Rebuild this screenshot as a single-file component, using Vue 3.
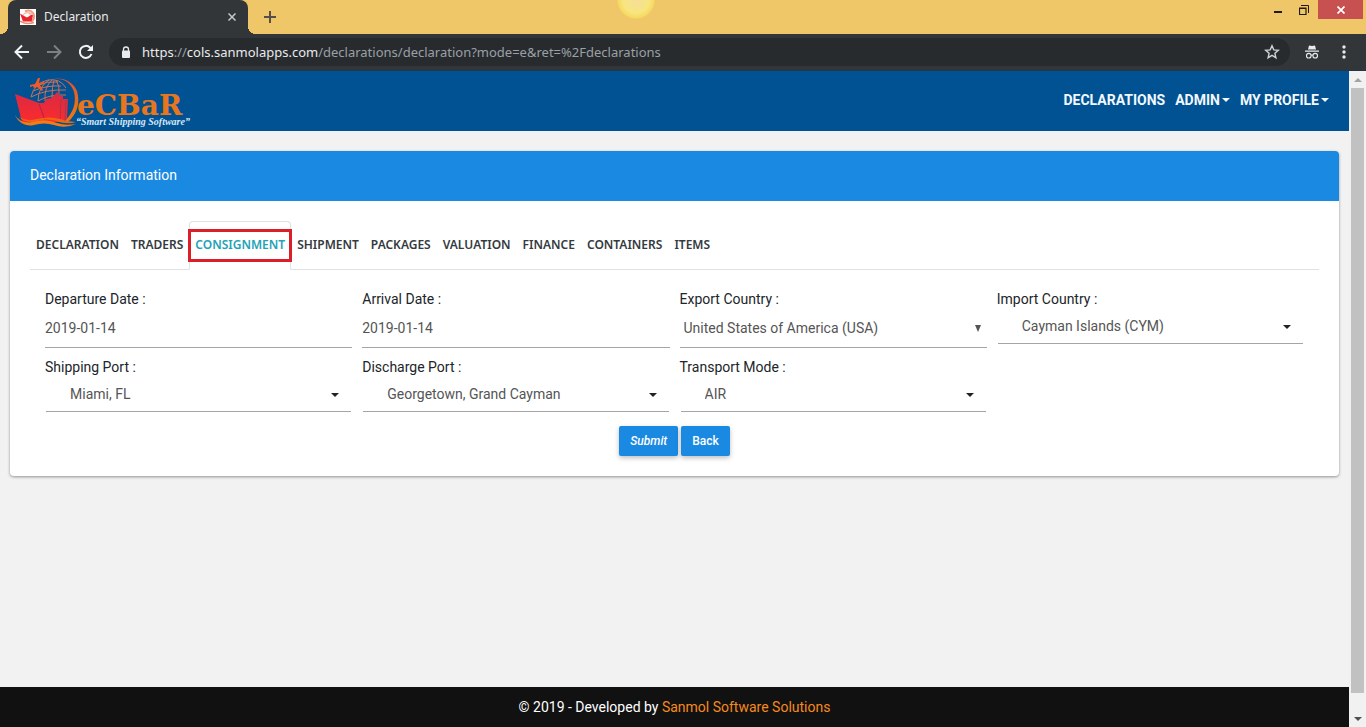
<script setup>
import { ref } from 'vue'

const tabs = ['Declaration', 'Traders', 'Consignment', 'Shipment', 'Packages', 'Valuation', 'Finance', 'Containers', 'Items']
const active = ref('Consignment')

const fields = ref([
  { id: 'departure', label: 'Departure Date :', kind: 'input', value: '2019-01-14' },
  { id: 'arrival', label: 'Arrival Date :', kind: 'input', value: '2019-01-14' },
  { id: 'export', label: 'Export Country :', kind: 'native', value: 'United States of America (USA)' },
  { id: 'import', label: 'Import Country :', kind: 'select', value: 'Cayman Islands (CYM)' },
  { id: 'shipping', label: 'Shipping Port :', kind: 'select', value: 'Miami, FL' },
  { id: 'discharge', label: 'Discharge Port :', kind: 'select', value: 'Georgetown, Grand Cayman' },
  { id: 'transport', label: 'Transport Mode :', kind: 'select', value: 'AIR' }
])
</script>

<template>
  <div class="window">
    <div class="titlebar">
      <div class="tab">
        <svg class="favicon" viewBox="0 0 16 16" aria-hidden="true">
          <rect width="16" height="16" fill="#fff" />
          <path d="M5 2.500Q10 0 13 4q3 5-2 9" fill="none" stroke="#f29a80" stroke-width="2" />
          <path d="M3 6q3-4 9-1M7 3q4 2 4 6" fill="none" stroke="#f4b6a0" stroke-width="1.200" />
          <path d="M0 4.500l5 3 2 1 5-3 1 1-1.500 6H3z" fill="#e8232b" />
          <path d="M0 12q6 4 14 1.500" fill="none" stroke="#f08a70" stroke-width="1.500" />
        </svg>
        <span class="tab-title">Declaration</span>
        <button class="tab-close" aria-label="Close tab">
          <svg width="8" height="8" viewBox="0 0 8 8"><path d="M.5.5l7 7M7.500.5l-7 7" stroke="#c6c9cc" stroke-width="1.500" /></svg>
        </button>
      </div>
      <button class="new-tab" aria-label="New tab">
        <svg width="12" height="12" viewBox="0 0 12 12"><path d="M6 0v12M0 6h12" stroke="#56504a" stroke-width="2" /></svg>
      </button>
      <div class="sun"></div>
      <div class="controls">
        <button class="control" aria-label="Minimize">
          <svg width="8" height="12" viewBox="0 0 8 12"><path d="M0 8h8" stroke="#1e1a14" stroke-width="2" /></svg>
        </button>
        <button class="control" aria-label="Restore">
          <svg width="10" height="10" viewBox="0 0 10 10"><path d="M2 .5h7.500v7.500" fill="none" stroke="#1e1a14" /><path d="M.5 3.500h6.500v6h-6.500zM0 3h7.500" fill="none" stroke="#1e1a14" stroke-width="1.200" /></svg>
        </button>
        <button class="control close" aria-label="Close">
          <svg width="8" height="8" viewBox="0 0 8 8"><path d="M.5.5l7 7M7.500.5l-7 7" stroke="#fff" stroke-width="1.700" /></svg>
        </button>
      </div>
    </div>

    <div class="toolbar">
      <button class="tool" aria-label="Back">
        <svg width="16" height="16" viewBox="0 0 16 16"><path d="M15 8H2M8 1.500L1.500 8 8 14.500" fill="none" stroke="#f1f3f4" stroke-width="2" /></svg>
      </button>
      <button class="tool" aria-label="Forward">
        <svg width="16" height="16" viewBox="0 0 16 16"><path d="M1 8h13M8 1.500L14.500 8 8 14.500" fill="none" stroke="#7d8083" stroke-width="2" /></svg>
      </button>
      <button class="tool" aria-label="Reload">
        <svg width="16" height="16" viewBox="0 0 16 16"><path d="M13.500 10a6 6 0 1 1-1.300-6.300L14 5.500" fill="none" stroke="#f1f3f4" stroke-width="2" /><path d="M15 1v6H9z" fill="#f1f3f4" /></svg>
      </button>
      <div class="omnibox">
        <svg width="10" height="13" viewBox="0 0 10 13" aria-hidden="true"><path d="M2.500 5V3.500a2.500 2.500 0 0 1 5 0V5" fill="none" stroke="#e8eaed" stroke-width="1.300" /><rect x="1" y="4.500" width="8" height="7.500" rx="1" fill="#e8eaed" /></svg>
        <div class="url" role="textbox" aria-label="Address" tabindex="0"><b>https</b>://<b>cols.sanmolapps.com</b>/declarations/declaration?mode=e&amp;ret=%2Fdeclarations</div>
        <button class="star" aria-label="Bookmark">
          <svg width="16" height="16" viewBox="0 0 16 16"><path d="M8 1.800l1.800 4.100 4.500.4-3.400 3 1 4.400L8 11.400l-3.900 2.300 1-4.400-3.400-3 4.500-.4z" fill="none" stroke="#d0d3d6" stroke-width="1.400" /></svg>
        </button>
      </div>
      <svg class="incognito" width="14" height="14" viewBox="0 0 14 14" role="img" aria-label="Incognito">
        <path d="M3 4.500L4 .500l3 .6 3-.6 1 4zM0 5.500h14v1.200H0z" fill="#e8eaed" />
        <circle cx="3.800" cy="10.700" r="2.300" fill="none" stroke="#e8eaed" stroke-width="1.100" />
        <circle cx="10.200" cy="10.700" r="2.300" fill="none" stroke="#e8eaed" stroke-width="1.100" />
        <path d="M6 10.300q1-.8 2 0" fill="none" stroke="#e8eaed" />
      </svg>
      <button class="menu" aria-label="Menu">
        <svg width="4" height="14" viewBox="0 0 4 14" fill="#e8eaed"><circle cx="2" cy="2" r="1.700" /><circle cx="2" cy="7" r="1.700" /><circle cx="2" cy="12" r="1.700" /></svg>
      </button>
    </div>

    <div class="viewport">
      <div class="page">
        <header class="header">
          <a href="#" class="logo" aria-label="DeCBaR">
            <svg width="178" height="56" viewBox="0 -1 178 56">
              <defs>
                <linearGradient id="hull" x1="0" y1="0" x2="0" y2="1"><stop offset="0" stop-color="#d92a45" /><stop offset="1" stop-color="#fb2b2c" /></linearGradient>
                <linearGradient id="arc" x1="0" y1="0" x2="0.3" y2="1"><stop offset="0" stop-color="#d8483f" /><stop offset="1" stop-color="#ef7412" /></linearGradient>
              </defs>
              <g transform="translate(-1 3)">
                <g fill="none" stroke="#c9705c" stroke-width="1">
                  <path d="M17 20Q20 6 34 3q12-2 18 8" />
                  <path d="M19 14q14-6 28-5M17 20q15-8 35-7M24 24q12-7 28-6M24 8q9-4 20-3" />
                  <path d="M24 24Q24 10 35 3M31 24Q30 10 38 3M38 21Q38 9 40 3M45 17Q46 9 42 3" />
                </g>
                <path d="M37 2Q55 0 60 15q4 16-10 30h4q14-13 9-31Q56-1 37 2z" fill="url(#arc)" />
                <path d="M1 17l24 9h5l2-4 6-1 5-6 3 4 3 0 0 3 5 0-1 20-7 3H8z" fill="url(#hull)" />
                <path d="M25 27l6 16" stroke="#b51f48" fill="none" />
                <path d="M47 22l-1 21M52 23l-1 20" stroke="#a63750" fill="none" />
                <path d="M5 40q8 5 18 2 12-3 23 0 8 3 16 3-9 3-20-1-10-3-19 0-11 3-18-4z" fill="#ef6513" />
                <path d="M0 37q6 10 18 8 14-4 25 1 8 3 19 1-11 5-22 1-10-3-20 0-13 3-20-11z" fill="#f47b18" />
                <path d="M16 8l5-1 3-6h2l-1 5 5-1v2l-4 1 3 5-1 1-5-4-3 1-1-2-3 1z" fill="#ef5a28" />
              </g>
              <text x="62" y="41" class="brand">eCBaR</text>
              <text x="61" y="51" class="tagline">“Smart Shipping Software”</text>
            </svg>
          </a>
          <nav class="nav">
            <a href="#">DECLARATIONS</a>
            <a href="#">ADMIN<i class="caret"></i></a>
            <a href="#">MY PROFILE<i class="caret"></i></a>
          </nav>
        </header>

        <main class="main">
          <section class="card">
            <h1 class="card-head">Declaration Information</h1>
            <div class="card-body">
              <div class="tabs" role="tablist">
                <button
                  v-for="t in tabs"
                  :key="t"
                  class="tab-link"
                  :class="{ active: t === active }"
                  role="tab"
                  :aria-selected="t === active"
                  @click="active = t"
                >{{ t }}</button>
              </div>
              <form @submit.prevent>
                <div class="grid">
                  <div v-for="f in fields" :key="f.id" class="field" :class="f.kind">
                    <label :for="f.id">{{ f.label }}</label>
                    <input v-if="f.kind === 'input'" :id="f.id" v-model="f.value" type="text">
                    <div v-else class="select-box">
                      <select :id="f.id"><option>{{ f.value }}</option></select>
                      <i class="arrow"></i>
                    </div>
                  </div>
                </div>
                <div class="actions">
                  <button type="submit" class="btn submit">Submit</button>
                  <button type="button" class="btn">Back</button>
                </div>
              </form>
            </div>
          </section>
        </main>

        <footer class="footer">© 2019 - Developed by <a href="#">Sanmol Software Solutions</a></footer>
      </div>
      <div class="scrollbar" aria-hidden="true">
        <i class="up"></i>
        <div class="thumb"></div>
        <i class="down"></i>
      </div>
    </div>
  </div>
</template>

<style>
body {
  background: #f2f2f2;
}
</style>

<style scoped>
* {
  box-sizing: border-box;
}
button {
  border: 0;
  padding: 0;
  margin: 0;
  background: none;
  font-family: inherit;
}
svg {
  display: block;
}
a {
  text-decoration: none;
}
.window {
  min-height: 100vh;
  display: flex;
  flex-direction: column;
  font: 14px/20px Roboto, sans-serif;
}
.titlebar {
  height: 34px;
  background: #efc768;
  display: flex;
  position: relative;
  padding-left: 8px;
}
.tab {
  width: 240px;
  background: #323639;
  border-radius: 8px 8px 0 0;
  display: flex;
  align-items: center;
  padding: 0 12px;
  gap: 8px;
  position: relative;
}
.tab::before,
.tab::after {
  content: '';
  position: absolute;
  bottom: 0;
  width: 8px;
  height: 8px;
}
.tab::before {
  left: -8px;
  background: radial-gradient(circle at 0 0, transparent 8px, #323639 8px);
}
.tab::after {
  right: -8px;
  background: radial-gradient(circle at 100% 0, transparent 8px, #323639 8px);
}
.favicon {
  width: 16px;
  height: 16px;
}
.tab-title {
  flex: 1;
  color: #e8eaed;
  font: 12px/16px "Noto Sans", sans-serif;
}
.new-tab {
  width: 44px;
  display: flex;
  align-items: center;
  justify-content: center;
}
.sun {
  position: absolute;
  left: calc(50% - 66px);
  top: 0;
  width: 38px;
  height: 20px;
  background: radial-gradient(circle at 50% 0, #f5df98 0, #f8e57f 13px, #f5da60 18px, transparent 19px);
}
.controls {
  margin-left: auto;
  display: flex;
  height: 19px;
  padding-right: 3px;
}
.control {
  width: 26px;
  display: flex;
  align-items: center;
  justify-content: center;
}
.close {
  width: 45px;
  margin-left: 1px;
  background: #c75050;
}
.toolbar {
  height: 37px;
  background: #323639;
  border-bottom: 1px solid #24374a;
  display: flex;
  align-items: center;
  padding: 0 20px 0 14px;
}
.tool {
  width: 16px;
  margin-right: 16px;
}
.omnibox {
  flex: 1;
  height: 28px;
  margin: 0 15px 0 -1px;
  border-radius: 14px;
  background: #282b2e;
  display: flex;
  align-items: center;
  padding: 0 10px 0 12px;
  gap: 11px;
}
.url {
  flex: 1;
  color: #9aa0a6;
  font: 13px/18px "Noto Sans", sans-serif;
  white-space: nowrap;
}
.url b {
  font-weight: 400;
  color: #e8eaed;
}
.incognito {
  margin-right: 23px;
}
.viewport {
  flex: 1;
  display: flex;
}
.page {
  flex: 1;
  min-width: 0;
  display: flex;
  flex-direction: column;
  background: #f2f2f2;
}
.header {
  height: 60px;
  background: #005292;
  display: flex;
  align-items: center;
  justify-content: space-between;
  padding: 0 20px 0 15px;
}
.logo {
  display: block;
}
.brand {
  font: bold 28px "DejaVu Serif", serif;
  fill: #e8761c;
}
.tagline {
  font: italic bold 10px "Liberation Serif", serif;
  fill: #d6e7f8;
}
.nav {
  display: flex;
  gap: 10px;
  padding-bottom: 2px;
}
.nav a {
  color: #f2f8ff;
  font-weight: 700;
  display: flex;
  align-items: center;
}
.caret {
  margin-left: 2px;
  border: 4px solid transparent;
  border-top-color: currentColor;
  border-bottom: 0;
}
.main {
  flex: 1;
  padding: 20px 10px;
}
.card {
  background: #fff;
  border-radius: 4px;
  box-shadow: 0 1px 3px rgba(0, 0, 0, 0.4);
}
.card-head {
  margin: 0;
  padding: 14px 20px 16px;
  background: #1a89e2;
  color: #fff;
  border-radius: 4px 4px 0 0;
  font: 400 14px/20px Roboto, sans-serif;
}
.card-body {
  padding: 20px;
}
.tabs {
  display: flex;
  border-bottom: 1px solid #dee2e6;
}
.tab-link {
  height: 49px;
  margin-bottom: -1px;
  padding: 0 5px 2px;
  border: 1px solid transparent;
  border-radius: 4px 4px 0 0;
  color: #343a40;
  font: 600 12px/18px "Noto Sans", sans-serif;
  text-transform: uppercase;
  position: relative;
}
.tab-link.active {
  color: #23a2b8;
  border-color: #dee2e6 #dee2e6 #fff;
  background: #fff;
}
.tab-link.active::after {
  content: '';
  position: absolute;
  inset: 7px -2px;
  border: 3px solid #da1f28;
}
.grid {
  display: grid;
  grid-template-columns: repeat(4, 1fr);
  row-gap: 9px;
  padding: 19px 10px 0;
}
.field {
  padding: 0 5px;
}
label {
  display: block;
  color: #212529;
}
input,
select {
  display: block;
  width: 100%;
  height: 39px;
  margin: 0;
  padding: 0;
  border: 0;
  border-bottom: 1px solid #a5a5a5;
  border-radius: 0;
  background: transparent;
  color: #555;
  font: 14px/20px Roboto, sans-serif;
  appearance: none;
  outline: 0;
}
.select-box {
  position: relative;
}
.native select {
  padding-left: 4px;
}
.select .select-box {
  margin: 0 1px;
}
.select select {
  height: 35px;
  padding-left: 24px;
}
.arrow {
  position: absolute;
  top: 16px;
  right: 12px;
  border: 4px solid transparent;
  border-top-color: #222;
  border-bottom: 0;
  pointer-events: none;
}
.native .arrow {
  right: 6px;
  border-width: 7px 3px 0;
  border-top-color: #555;
}
.actions {
  display: flex;
  justify-content: center;
  gap: 3px;
  margin-top: 14px;
}
.btn {
  height: 30px;
  padding: 0 11px;
  background: #1a89e2;
  color: #fff;
  border-radius: 2px;
  font: 500 12px/20px Roboto, sans-serif;
  box-shadow: 0 2px 5px rgba(0, 0, 0, 0.26);
}
.submit {
  font-style: italic;
}
.footer {
  height: 40px;
  background: #111;
  color: #fff;
  line-height: 40px;
  text-align: center;
}
.footer a {
  color: #f58a1f;
}
.scrollbar {
  width: 17px;
  background: #f1f1f1;
  display: flex;
  flex-direction: column;
  align-items: center;
}
.up,
.down {
  border: 4px solid transparent;
}
.up {
  border-top: 0;
  border-bottom-color: #a3a3a3;
  margin: 7px 0 6px;
}
.thumb {
  flex: 1;
  width: 13px;
  background: #c1c1c1;
}
.down {
  border-bottom: 0;
  border-top-color: #505050;
  margin: 24px 0 6px;
}
</style>
